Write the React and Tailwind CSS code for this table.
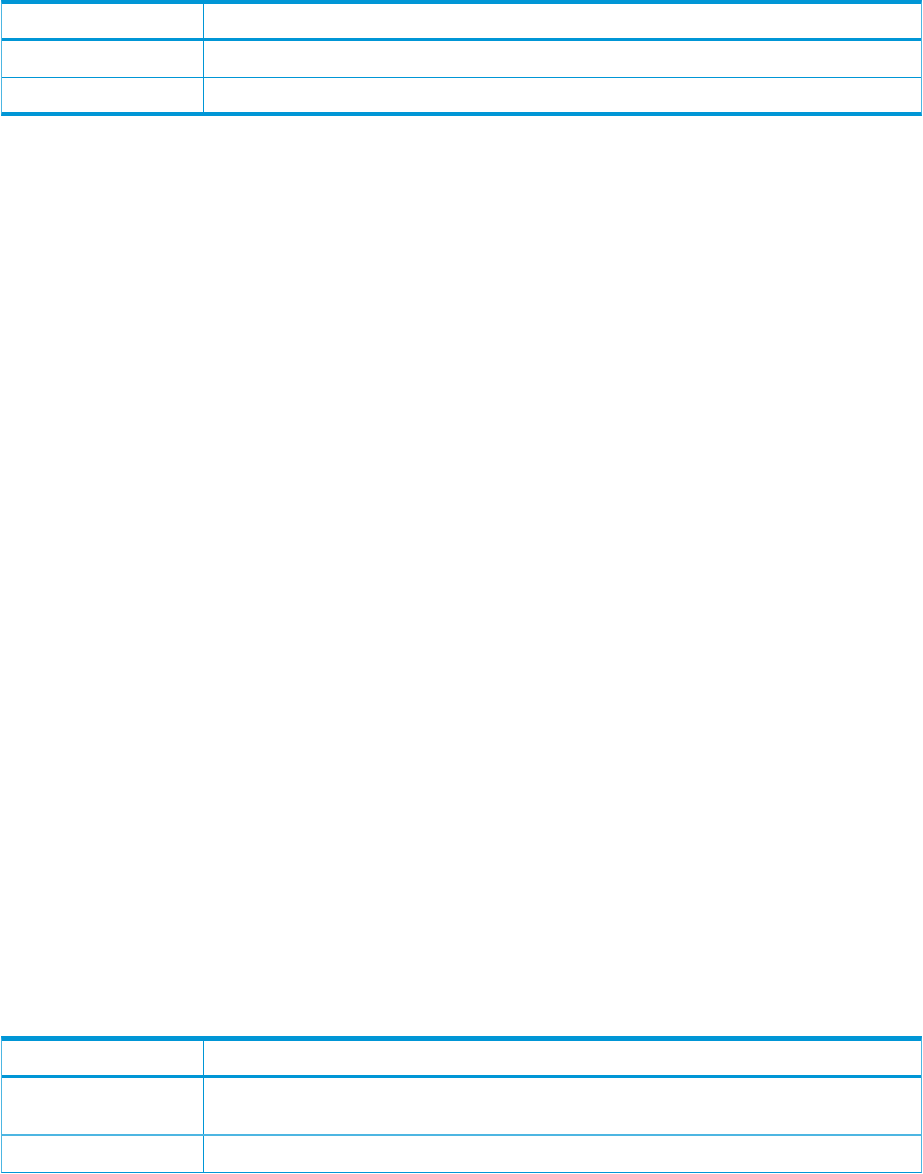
import React from 'react';

function Row({ height, border }) {
  return (
    <div className={`grid grid-cols-[202px_1fr] ${border}`} style={{ height }}>
      <div className="border-r border-[#0096d6]" />
      <div />
    </div>
  );
}

function App() {
  return (
    <div className="min-h-screen bg-white">
      {/* First table */}
      <div className="ml-[1px] w-[921px] border-t-4 border-b-4 border-x border-x-[#4db6e2] border-t-[#0096d6] border-b-[#0096d6]">
        <div className="grid grid-cols-[202px_1fr] h-[37px] border-b-[3px] border-[#0096d6]">
          <div className="border-r border-[#0096d6]" />
          <div />
        </div>
        <div className="grid grid-cols-[202px_1fr] h-[37px] border-b border-[#0096d6]">
          <div className="border-r border-[#0096d6]" />
          <div />
        </div>
        <div className="grid grid-cols-[202px_1fr] h-[34px]">
          <div className="border-r border-[#0096d6]" />
          <div />
        </div>
      </div>

      {/* Second table */}
      <div className="mt-[920px] ml-[1px] w-[921px] border-t-[5px] border-b border-x border-x-[#4db6e2] border-t-[#0096d6] border-b-[#0096d6]">
        <div className="grid grid-cols-[202px_1fr] h-[37px] border-b-[3px] border-[#0096d6]">
          <div className="border-r border-[#0096d6]" />
          <div />
        </div>
        <div className="grid grid-cols-[202px_1fr] h-[58px] border-b-2 border-[#4db6e2]">
          <div className="border-r border-[#0096d6]" />
          <div />
        </div>
        <div className="grid grid-cols-[202px_1fr] h-[36px]">
          <div className="border-r border-[#0096d6]" />
          <div />
        </div>
      </div>
    </div>
  );
}

export default App;
